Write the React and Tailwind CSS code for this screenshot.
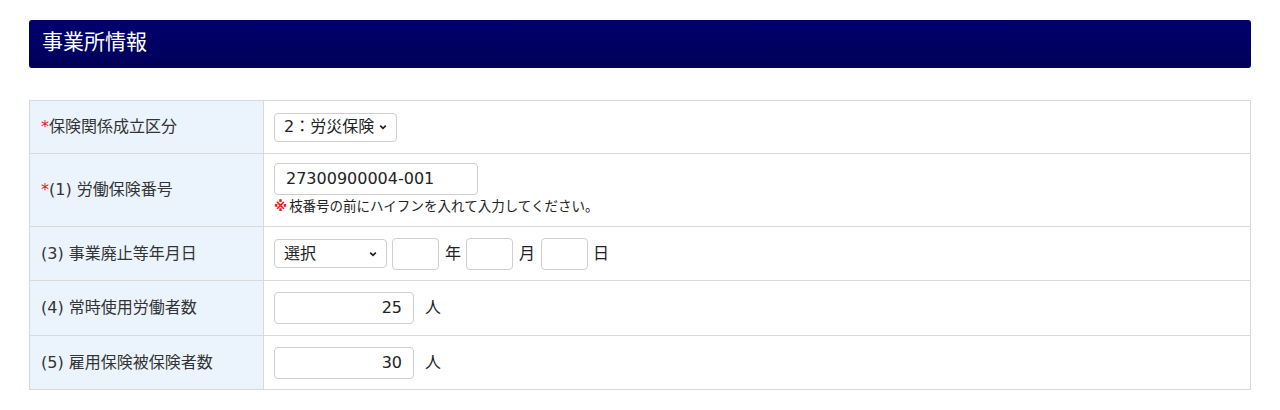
import React from "react";

const font = { fontFamily: '"DejaVu Sans", "Noto Sans CJK JP", sans-serif' };

function Chevron() {
  return (
    <svg width="10" height="10" viewBox="0 0 10 10" className="shrink-0">
      <path d="M2.2 3.6 L5 6.4 L7.8 3.6" fill="none" stroke="#222" strokeWidth="1.7" />
    </svg>
  );
}

function Select({ value, width }) {
  return (
    <div
      className={`flex items-center justify-between h-[29px] rounded-[4px] border border-[#cfcfcf] bg-white pl-[9px] pr-[8px] text-[16px] text-[#222] ${width}`}
    >
      <span>{value}</span>
      <Chevron />
    </div>
  );
}

function Box({ value = "", width, align = "left" }) {
  return (
    <div
      className={`flex items-center h-[32px] rounded-[4px] border border-[#cfcfcf] bg-white px-[11px] text-[16px] text-[#222] ${width} ${
        align === "right" ? "justify-end" : ""
      }`}
    >
      {value}
    </div>
  );
}

function Row({ label, required, children, height, top }) {
  return (
    <div className={`grid grid-cols-[234px_1fr] border-t border-[#d9d9d9] first:border-t-0 ${height}`}>
      <div className="flex items-center bg-[#ebf4fc] border-r border-[#d9d9d9] pl-[11px] text-[16px] text-[#333]">
        {required && <span className="text-[#e0201c]">*</span>}
        {label}
      </div>
      <div className={`flex flex-col pl-[10px] ${top ? "justify-start pt-[9px]" : "justify-center"}`}>{children}</div>
    </div>
  );
}

export default function App() {
  return (
    <div className="bg-white w-[1280px] h-[410px] pt-[20px] px-[29px]" style={font}>
      <div className="h-[48px] rounded-[3px] bg-gradient-to-b from-[#00006e] to-[#000058] flex items-center pl-[13px] pb-[2px] text-white text-[21px]">
        事業所情報
      </div>

      <div className="mt-[32px] border border-[#d9d9d9]">
        <Row label="保険関係成立区分" required height="h-[52px]">
          <Select value="2：労災保険" width="w-[123px]" />
        </Row>
        <Row label="(1) 労働保険番号" required height="h-[73px]" top>
          <Box value="27300900004-001" width="w-[204px]" />
          <div className="mt-[1px] text-[13.5px] text-[#222] flex items-center">
            <span className="text-[#e0201c] font-bold mr-[2px]">※</span>
            枝番号の前にハイフンを入れて入力してください。
          </div>
        </Row>
        <Row label="(3) 事業廃止等年月日" height="h-[54px]">
          <div className="flex items-center text-[16px] text-[#222]">
            <Select value="選択" width="w-[113px]" />
            <div className="ml-[5px]">
              <Box width="w-[47px]" />
            </div>
            <span className="ml-[6px] mr-[5px]">年</span>
            <Box width="w-[47px]" />
            <span className="ml-[6px] mr-[6px]">月</span>
            <Box width="w-[47px]" />
            <span className="ml-[5px]">日</span>
          </div>
        </Row>
        <Row label="(4) 常時使用労働者数" height="h-[55px]">
          <div className="flex items-center text-[16px] text-[#222]">
            <Box value="25" width="w-[140px]" align="right" />
            <span className="ml-[11px]">人</span>
          </div>
        </Row>
        <Row label="(5) 雇用保険被保険者数" height="h-[54px]">
          <div className="flex items-center text-[16px] text-[#222]">
            <Box value="30" width="w-[140px]" align="right" />
            <span className="ml-[11px]">人</span>
          </div>
        </Row>
      </div>
    </div>
  );
}
